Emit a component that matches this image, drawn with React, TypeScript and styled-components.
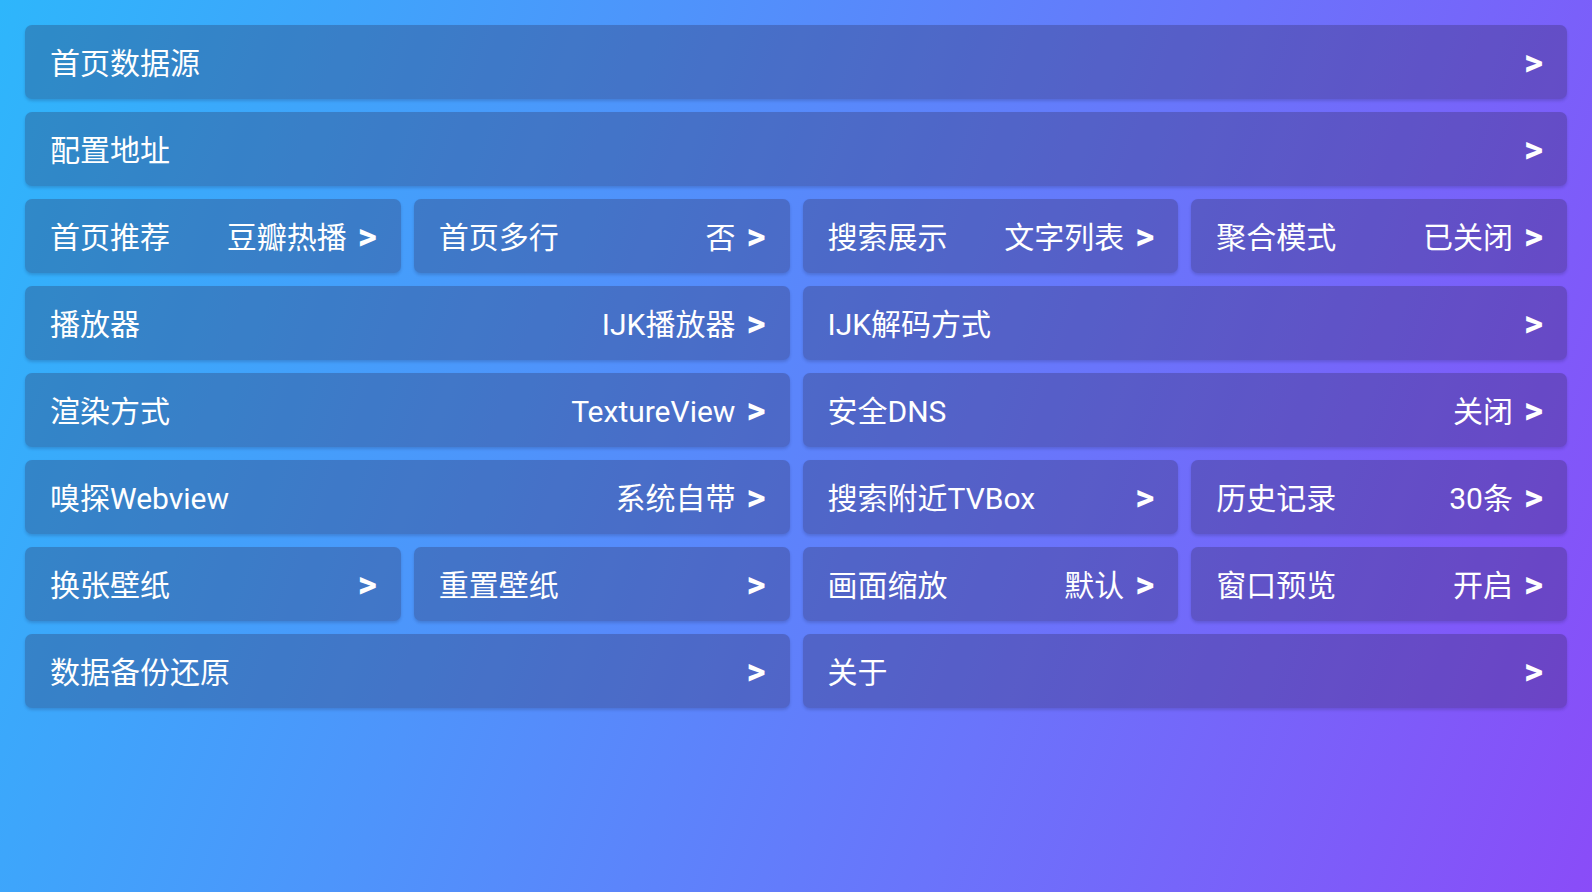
import React from "react";
import styled, { createGlobalStyle } from "styled-components";

const GlobalStyle = createGlobalStyle`
  html, body {
    margin: 0;
    padding: 0;
    height: 100%;
  }
  body {
    font-family: Roboto, "Noto Sans CJK SC", "Noto Sans", sans-serif;
    background: linear-gradient(110deg, #2eb6fb 0%, #4e94fb 35%, #6a74fb 65%, #8a4cf8 100%);
    background-attachment: fixed;
    min-height: 100vh;
  }
  #root {
    min-height: 100vh;
  }
`;

const Page = styled.main`
  box-sizing: border-box;
  min-height: 100vh;
  padding: 25px;
`;

const Grid = styled.div`
  display: grid;
  grid-template-columns: repeat(4, 1fr);
  grid-auto-rows: 74px;
  gap: 13px;
`;

const Card = styled.div<{ $span: number }>`
  grid-column: span ${(p) => p.$span};
  display: flex;
  align-items: center;
  box-sizing: border-box;
  padding: 3px 24px 0 25px;
  border-radius: 7px;
  background: rgba(40, 28, 62, 0.27);
  box-shadow: 0 2px 3px rgba(20, 20, 60, 0.18);
  color: #ffffff;
  font-size: 30px;
  line-height: 1;
  white-space: nowrap;
`;

const Label = styled.span`
  flex: 1;
`;

const Value = styled.span`
  margin-left: 12px;
`;

const Arrow = styled.span`
  margin-left: 11px;
  font-family: Roboto, sans-serif;
  font-size: 37px;
  font-weight: 700;
  position: relative;
  top: -1px;
`;

type Item = { label: string; value?: string; span: number };

const items: Item[] = [
  { label: "首页数据源", span: 4 },
  { label: "配置地址", span: 4 },
  { label: "首页推荐", value: "豆瓣热播", span: 1 },
  { label: "首页多行", value: "否", span: 1 },
  { label: "搜索展示", value: "文字列表", span: 1 },
  { label: "聚合模式", value: "已关闭", span: 1 },
  { label: "播放器", value: "IJK播放器", span: 2 },
  { label: "IJK解码方式", span: 2 },
  { label: "渲染方式", value: "TextureView", span: 2 },
  { label: "安全DNS", value: "关闭", span: 2 },
  { label: "嗅探Webview", value: "系统自带", span: 2 },
  { label: "搜索附近TVBox", span: 1 },
  { label: "历史记录", value: "30条", span: 1 },
  { label: "换张壁纸", span: 1 },
  { label: "重置壁纸", span: 1 },
  { label: "画面缩放", value: "默认", span: 1 },
  { label: "窗口预览", value: "开启", span: 1 },
  { label: "数据备份还原", span: 2 },
  { label: "关于", span: 2 },
];

export default function App() {
  return (
    <>
      <GlobalStyle />
      <Page>
        <Grid>
          {items.map((it) => (
            <Card key={it.label} $span={it.span}>
              <Label>{it.label}</Label>
              {it.value && <Value>{it.value}</Value>}
              <Arrow>&gt;</Arrow>
            </Card>
          ))}
        </Grid>
      </Page>
    </>
  );
}
